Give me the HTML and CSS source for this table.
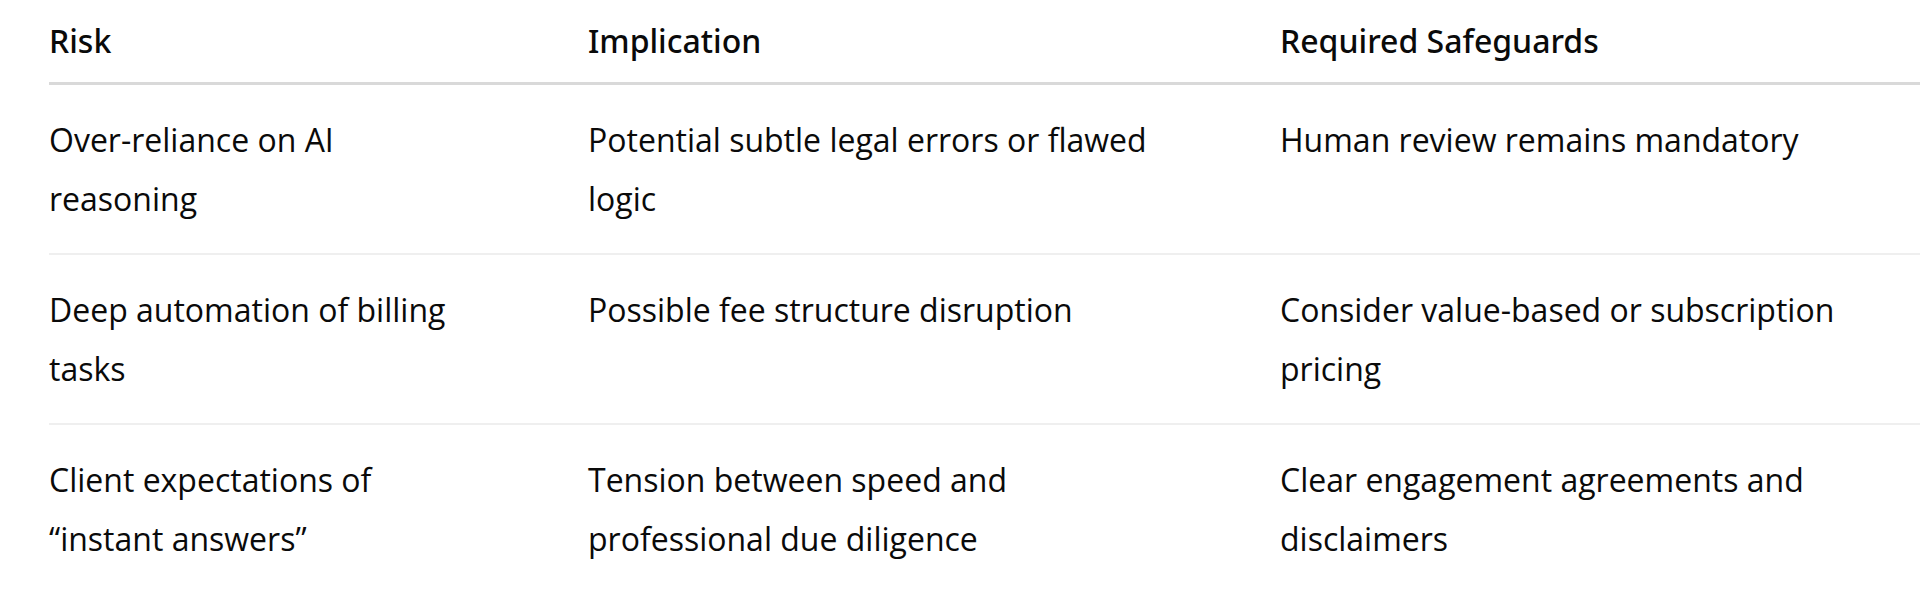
FILE: index.html
```html
<!DOCTYPE html>
<html lang="en">
<head>
<meta charset="utf-8">
<title>Risks</title>
<link rel="stylesheet" href="styles.css">
</head>
<body>
<table class="risk-table">
  <colgroup>
    <col class="col-risk">
    <col class="col-impl">
    <col class="col-safe">
  </colgroup>
  <thead>
    <tr>
      <th class="c1">Risk</th>
      <th class="c2">Implication</th>
      <th class="c3">Required Safeguards</th>
    </tr>
  </thead>
  <tbody>
    <tr>
      <td class="c1">Over-reliance on AI reasoning</td>
      <td class="c2">Potential subtle legal errors or flawed logic</td>
      <td class="c3">Human review remains mandatory</td>
    </tr>
    <tr>
      <td class="c1">Deep automation of billing tasks</td>
      <td class="c2">Possible fee structure disruption</td>
      <td class="c3">Consider value-based or subscription pricing</td>
    </tr>
    <tr>
      <td class="c1">Client expectations of “instant answers”</td>
      <td class="c2">Tension between speed and professional due diligence</td>
      <td class="c3">Clear engagement agreements and disclaimers</td>
    </tr>
  </tbody>
</table>
</body>
</html>
```

FILE: styles.css
```css
html, body {
  margin: 0;
  padding: 0;
  background: #ffffff;
}

body {
  width: 1920px;
  height: 605px;
  overflow: hidden;
  font-family: "Open Sans", "Noto Sans", sans-serif;
  font-size: 32px;
  color: #0a0a0a;
}

.risk-table {
  margin-left: 49px;
  width: 1871px;
  border-collapse: collapse;
  table-layout: fixed;
}

.col-risk { width: 539px; }
.col-impl { width: 692px; }
.col-safe { width: 640px; }

.risk-table th,
.risk-table td {
  text-align: left;
  vertical-align: top;
  line-height: 59px;
  padding-left: 0;
}

.risk-table th {
  font-family: "Noto Sans", "Open Sans", sans-serif;
  font-weight: 500;
  padding-top: 11px;
  padding-bottom: 12px;
  border-bottom: 3px solid #d9d9d9;
}

.risk-table td {
  font-weight: 400;
  padding-top: 25px;
  padding-bottom: 25px;
  border-bottom: 2px solid #efefef;
}

.risk-table tbody tr:last-child td {
  border-bottom: none;
}

.c1 { padding-right: 119px; }
.c2 { padding-right: 104px; }
.c3 { padding-right: 40px; }
```
